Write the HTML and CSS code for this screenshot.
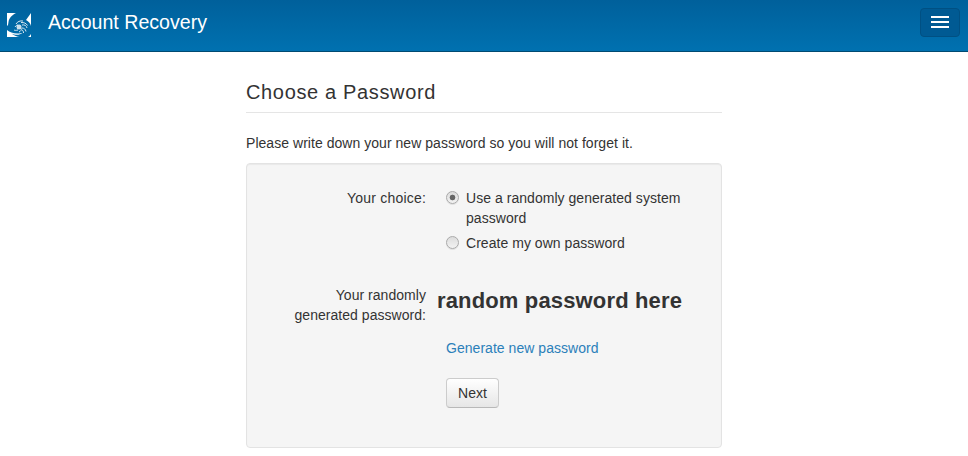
FILE: index.html
```html
<!DOCTYPE html>
<html lang="en">
<head>
    <meta charset="UTF-8">
    <meta name="viewport" content="width=device-width, initial-scale=1.0">
    <title>Account Recovery</title>
    <link rel="stylesheet" href="styles.css">
</head>
<body>
    <div class="navbar">
        <div class="brand">
            <svg class="logo" width="24" height="24" viewBox="0 0 24 24">
                <path fill="#fff" d="M0 0h9C5 2 2 5 1.500 9l-.5 3-1 1zM24 0v13c-.5-3-3-5-5-6zM0 17c3 2.500 7 4 12 3.500l3.500-.5c-3 2.500-8 2-11 .5 3 2 6 3.500 8 3.500H0zM21 24c1-.5 2-1.500 3-3v3z"/>
                <g fill="none" stroke="#fff" stroke-width="1" opacity="0.85">
                    <path d="M9 11c1.500-2.500 4-3.500 7-3"/>
                    <path d="M8 14c1-1.500 2-2 3-2"/>
                    <path d="M11 17c-2 .5-3 .5-4 0"/>
                    <path d="M12 19c1.500-.5 2.500-2 2.500-3.500"/>
                    <path d="M14 9.500c3 0 5 .5 6.500 3"/>
                    <path d="M15 12c2.500-.5 4.500.5 5 3"/>
                    <path d="M15 15c2 0 3.500 1 4 3.500"/>
                    <path d="M15 17c1 .5 1.500 1.500 1.500 3"/>
                </g>
                <circle cx="12" cy="14" r="2.500" fill="#fff" opacity="0.8"/>
            </svg>
            <span class="brand-title">Account Recovery</span>
        </div>
        <button class="menu-btn">
            <span></span>
            <span></span>
            <span></span>
        </button>
    </div>

    <div class="content">
        <h1>Choose a Password</h1>
        <p class="intro">Please write down your new password so you will not forget it.</p>

        <div class="well">
            <div class="row row-choice">
                <div class="label label-wide">Your choice:</div>
                <div class="field">
                    <label class="radio"><input type="radio" name="choice" checked><span>Use a randomly generated system password</span></label>
                    <label class="radio"><input type="radio" name="choice"><span>Create my own password</span></label>
                </div>
            </div>

            <div class="row row-password">
                <div class="label">Your randomly<br>generated password:</div>
                <div class="password">random password here</div>
            </div>

            <div class="row row-link">
                <div class="label"></div>
                <div class="field"><a href="#">Generate new password</a></div>
            </div>

            <div class="row row-next">
                <div class="label"></div>
                <div class="field"><button class="btn">Next</button></div>
            </div>
        </div>
    </div>
</body>
</html>
```

FILE: styles.css
```css
* {
    box-sizing: border-box;
}

body {
    margin: 0;
    background: #fff;
    color: #333;
    font-family: "Liberation Sans", Arial, sans-serif;
    font-size: 14px;
    line-height: 20px;
    letter-spacing: 0.04px;
}

.navbar {
    height: 52px;
    display: flex;
    align-items: center;
    justify-content: space-between;
    padding: 0 8px 7px 7px;
    background: linear-gradient(to bottom, #00609b, #0071b0);
    border-bottom: 1px solid #004a72;
}

.brand {
    display: flex;
    align-items: center;
}

.logo {
    display: block;
    margin-top: 5px;
}

.brand-title {
    margin-left: 17px;
    margin-top: -1px;
    color: #fff;
    font-size: 19.6px;
    letter-spacing: 0;
}

.menu-btn {
    width: 40px;
    height: 29px;
    display: flex;
    flex-direction: column;
    align-items: center;
    justify-content: center;
    gap: 3px;
    padding: 0;
    background: #005a93;
    border: 1px solid #005083;
    border-radius: 4px;
}

.menu-btn span {
    width: 18px;
    height: 2px;
    background: #fff;
}

.content {
    width: 476px;
    margin: 0 auto;
}

h1 {
    margin: 28px 0 20px;
    padding-bottom: 7px;
    border-bottom: 1px solid #e5e5e5;
    font-size: 20px;
    font-weight: 400;
    line-height: 25px;
    letter-spacing: 0.65px;
}

.intro {
    margin: 0 0 10px;
}

.well {
    height: 285px;
    padding: 24px 19px 0;
    background: #f5f5f5;
    border: 1px solid #e3e3e3;
    border-radius: 4px;
    box-shadow: inset 0 1px 1px rgba(0, 0, 0, 0.05);
}

.row {
    display: flex;
}

.label {
    width: 160px;
    flex: none;
    text-align: right;
}

.label-wide {
    letter-spacing: 0.2px;
}

.field {
    margin-left: 20px;
    flex: 1;
}

.radio {
    display: flex;
    margin-bottom: 5px;
}

.radio input {
    appearance: none;
    width: 13px;
    height: 13px;
    margin: 3px 7px 0 0;
    flex: none;
    background: linear-gradient(to bottom, #dcdcdc, #f2f2f2);
    border: 1px solid #aaa;
    border-radius: 50%;
    box-shadow: 0 1px 0 #e0e0e0;
}

.radio input:checked {
    background: radial-gradient(circle, #666 0, #666 2.5px, transparent 3.2px), linear-gradient(to bottom, #dcdcdc, #f2f2f2);
}

.row-password {
    margin-top: 27px;
}

.password {
    margin-left: 11px;
    margin-top: 2px;
    font-size: 22px;
    line-height: 28px;
    font-weight: 700;
    letter-spacing: 0.15px;
    white-space: nowrap;
}

.row-link {
    margin-top: 13px;
}

a {
    color: #2b80ba;
    text-decoration: none;
}

.row-next {
    margin-top: 20px;
}

.btn {
    width: 53px;
    height: 30px;
    padding: 0;
    color: #333;
    font-family: inherit;
    font-size: 14px;
    background: linear-gradient(to bottom, #fff, #e6e6e6);
    border: 1px solid #ccc;
    border-bottom-color: #b8b8b8;
    border-radius: 4px;
}
```
